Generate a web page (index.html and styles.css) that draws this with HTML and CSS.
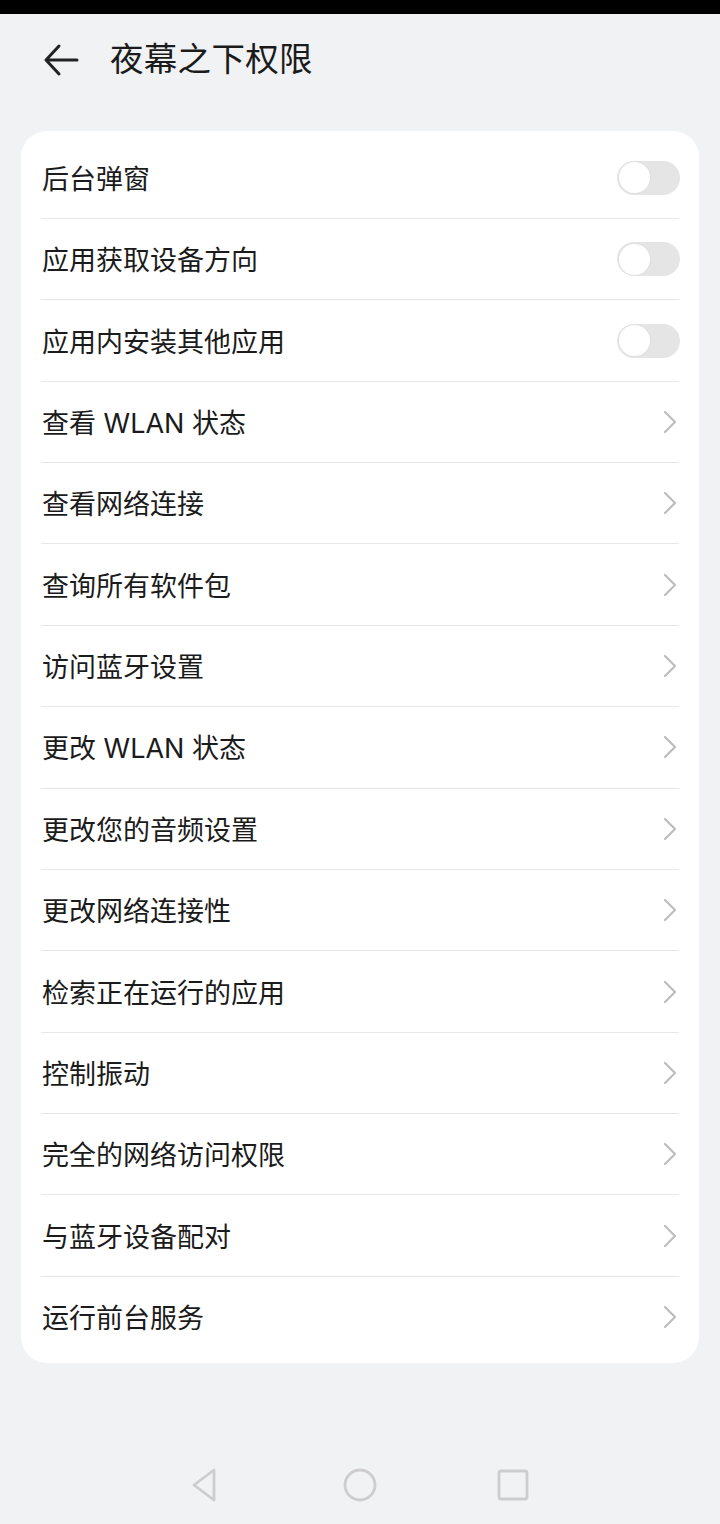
FILE: index.html
```html
<!DOCTYPE html>
<html lang="zh-CN">
<head>
<meta charset="utf-8">
<title>夜幕之下权限</title>
<link rel="stylesheet" href="styles.css">
</head>
<body>
<div class="page">
  <div class="statusbar"></div>
  <header class="header">
    <svg class="back" width="36" height="36" viewBox="0 0 36 36">
      <path d="M34 18 H3 M16 4 L3 18 L16 32" fill="none" stroke="#222" stroke-width="3" stroke-linecap="round" stroke-linejoin="round"/>
    </svg>
    <h1 class="title">夜幕之下权限</h1>
  </header>
  <main class="card">
    <div class="row"><span class="label">后台弹窗</span><span class="toggle"><span class="knob"></span></span></div>
    <div class="row"><span class="label">应用获取设备方向</span><span class="toggle"><span class="knob"></span></span></div>
    <div class="row"><span class="label">应用内安装其他应用</span><span class="toggle"><span class="knob"></span></span></div>
    <div class="row"><span class="label">查看 WLAN 状态</span><svg class="chev" width="14" height="24" viewBox="0 0 14 24"><path d="M2 2 L12 12 L2 22" fill="none" stroke="#bdbdbd" stroke-width="2.2" stroke-linecap="round" stroke-linejoin="round"/></svg></div>
    <div class="row"><span class="label">查看网络连接</span><svg class="chev" width="14" height="24" viewBox="0 0 14 24"><path d="M2 2 L12 12 L2 22" fill="none" stroke="#bdbdbd" stroke-width="2.2" stroke-linecap="round" stroke-linejoin="round"/></svg></div>
    <div class="row"><span class="label">查询所有软件包</span><svg class="chev" width="14" height="24" viewBox="0 0 14 24"><path d="M2 2 L12 12 L2 22" fill="none" stroke="#bdbdbd" stroke-width="2.2" stroke-linecap="round" stroke-linejoin="round"/></svg></div>
    <div class="row"><span class="label">访问蓝牙设置</span><svg class="chev" width="14" height="24" viewBox="0 0 14 24"><path d="M2 2 L12 12 L2 22" fill="none" stroke="#bdbdbd" stroke-width="2.2" stroke-linecap="round" stroke-linejoin="round"/></svg></div>
    <div class="row"><span class="label">更改 WLAN 状态</span><svg class="chev" width="14" height="24" viewBox="0 0 14 24"><path d="M2 2 L12 12 L2 22" fill="none" stroke="#bdbdbd" stroke-width="2.2" stroke-linecap="round" stroke-linejoin="round"/></svg></div>
    <div class="row"><span class="label">更改您的音频设置</span><svg class="chev" width="14" height="24" viewBox="0 0 14 24"><path d="M2 2 L12 12 L2 22" fill="none" stroke="#bdbdbd" stroke-width="2.2" stroke-linecap="round" stroke-linejoin="round"/></svg></div>
    <div class="row"><span class="label">更改网络连接性</span><svg class="chev" width="14" height="24" viewBox="0 0 14 24"><path d="M2 2 L12 12 L2 22" fill="none" stroke="#bdbdbd" stroke-width="2.2" stroke-linecap="round" stroke-linejoin="round"/></svg></div>
    <div class="row"><span class="label">检索正在运行的应用</span><svg class="chev" width="14" height="24" viewBox="0 0 14 24"><path d="M2 2 L12 12 L2 22" fill="none" stroke="#bdbdbd" stroke-width="2.2" stroke-linecap="round" stroke-linejoin="round"/></svg></div>
    <div class="row"><span class="label">控制振动</span><svg class="chev" width="14" height="24" viewBox="0 0 14 24"><path d="M2 2 L12 12 L2 22" fill="none" stroke="#bdbdbd" stroke-width="2.2" stroke-linecap="round" stroke-linejoin="round"/></svg></div>
    <div class="row"><span class="label">完全的网络访问权限</span><svg class="chev" width="14" height="24" viewBox="0 0 14 24"><path d="M2 2 L12 12 L2 22" fill="none" stroke="#bdbdbd" stroke-width="2.2" stroke-linecap="round" stroke-linejoin="round"/></svg></div>
    <div class="row"><span class="label">与蓝牙设备配对</span><svg class="chev" width="14" height="24" viewBox="0 0 14 24"><path d="M2 2 L12 12 L2 22" fill="none" stroke="#bdbdbd" stroke-width="2.2" stroke-linecap="round" stroke-linejoin="round"/></svg></div>
    <div class="row"><span class="label">运行前台服务</span><svg class="chev" width="14" height="24" viewBox="0 0 14 24"><path d="M2 2 L12 12 L2 22" fill="none" stroke="#bdbdbd" stroke-width="2.2" stroke-linecap="round" stroke-linejoin="round"/></svg></div>
  </main>
  <nav class="navbar">
    <span class="navitem">
      <svg width="40" height="40" viewBox="0 0 40 40"><path d="M27 5 L27 35 L7 20 Z" fill="none" stroke="#cdcdcd" stroke-width="2.8" stroke-linejoin="round"/></svg>
    </span>
    <span class="navitem">
      <svg width="40" height="40" viewBox="0 0 40 40"><circle cx="20" cy="20" r="15" fill="none" stroke="#cdcdcd" stroke-width="2.8"/></svg>
    </span>
    <span class="navitem">
      <svg width="40" height="40" viewBox="0 0 40 40"><rect x="6" y="6" width="28" height="28" rx="2" fill="none" stroke="#cdcdcd" stroke-width="2.8"/></svg>
    </span>
  </nav>
</div>
</body>
</html>
```

FILE: styles.css
```css
* { box-sizing: border-box; }
html, body {
  margin: 0;
  padding: 0;
  background: #f1f2f4;
}
body {
  font-family: Inter, "Noto Sans CJK SC", "Noto Sans", sans-serif;
  color: #1b1b1b;
}
.page {
  width: 720px;
  height: 1524px;
  display: flex;
  flex-direction: column;
}
.statusbar {
  height: 14px;
  background: #000;
  flex: none;
}
.header {
  height: 94px;
  display: flex;
  align-items: center;
  padding-left: 43px;
  padding-bottom: 4px;
  flex: none;
}
.back {
  display: block;
  flex: none;
  margin-top: 2px;
}
.title {
  margin: 0 0 0 31px;
  font-size: 33.5px;
  font-weight: 400;
  line-height: 40px;
  color: #1b1b1b;
  letter-spacing: 0.3px;
}
.card {
  margin: 23px 21px 0;
  background: #fff;
  border-radius: 26px;
  padding: 6.6px 20px 6px;
  display: flex;
  flex-direction: column;
}
.row {
  height: 81.38px;
  display: flex;
  align-items: center;
  justify-content: space-between;
  border-top: 1px solid #e6e6e6;
  padding-left: 1px;
}
.row:first-child {
  border-top: none;
  height: 80.38px;
}
.label {
  font-size: 27px;
  line-height: 36px;
  padding-top: 4px;
  color: #1b1b1b;
}
.toggle {
  width: 63px;
  height: 34px;
  border-radius: 17px;
  background: #e5e5e5;
  display: flex;
  align-items: center;
  padding-left: 1.5px;
  margin-right: -1px;
}
.knob {
  width: 31px;
  height: 31px;
  border-radius: 50%;
  background: #fff;
  box-shadow: 0 0 0 1px #e0e0e0;
}
.chev {
  display: block;
  margin-right: 2px;
}
.navbar {
  margin-top: auto;
  height: 78px;
  display: flex;
  justify-content: center;
  align-items: center;
  gap: 113px;
  flex: none;
}
.navitem {
  width: 40px;
  height: 40px;
  display: flex;
  align-items: center;
  justify-content: center;
}
.navitem svg { display: block; }
```
